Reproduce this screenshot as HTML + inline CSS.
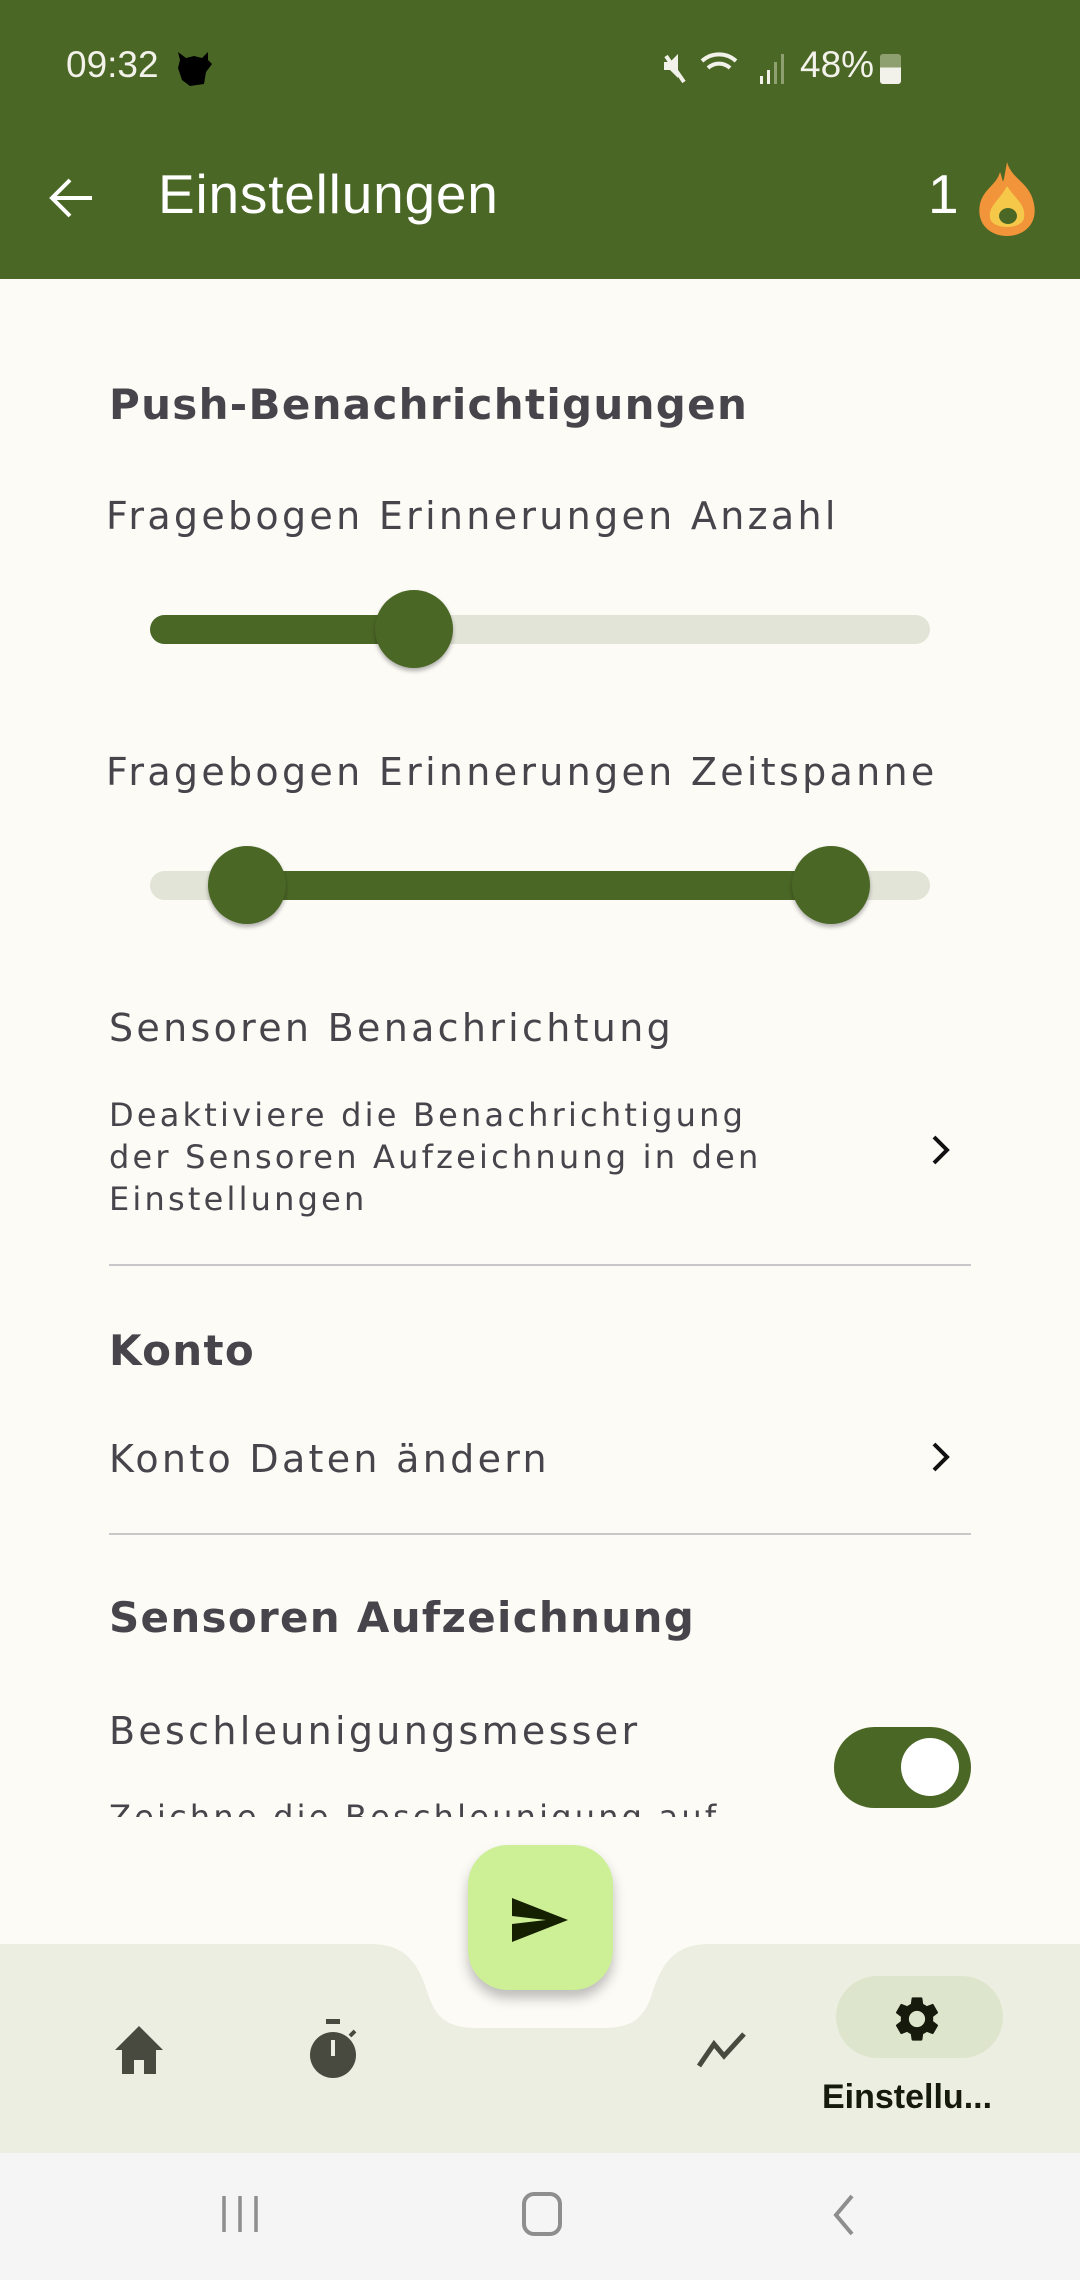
<!DOCTYPE html>
<html><head><meta charset="utf-8"><style>
*{margin:0;padding:0;box-sizing:border-box}
body{width:1080px;height:2280px;position:relative;overflow:hidden;background:#fcfbf6;font-family:"DejaVu Sans","Liberation Sans",sans-serif;color:#47454b}
.abs{position:absolute;white-space:nowrap}
.h{font-size:42px;font-weight:bold;letter-spacing:1.3px}
.t{font-size:38px;letter-spacing:3.3px}
.d{font-size:32px;letter-spacing:3.2px;line-height:42px}
.track{position:absolute;height:29px;border-radius:15px;background:#e3e4d8}
.act{position:absolute;height:29px;background:#4b6726;border-radius:15px}
.thumb{position:absolute;width:78px;height:78px;border-radius:50%;background:#4b6726;box-shadow:0 3px 4px rgba(0,0,0,.3)}
.div{position:absolute;left:109px;width:862px;height:2px;background:#c9c7c9}
</style></head><body>
<div class="abs" style="left:0;top:0;width:1080px;height:279px;background:#4b6726"></div>
<div class="abs" style="left:66px;top:44px;font-family:'Liberation Sans',sans-serif;font-size:37px;color:#f2f2ea">09:32</div>
<svg class="abs" style="left:174px;top:50px" width="40" height="36" viewBox="0 0 40 36"><path d="M6 10L4 2 12 8 20 6 28 8 34 2 34 10 38 14 32 22 30 34 16 36 8 30 4 18Z" fill="#000"/></svg>
<div class="abs" style="left:800px;top:44px;font-family:'Liberation Sans',sans-serif;font-size:37px;color:#f2f2ea">48%</div>
<svg class="abs" style="left:660px;top:48px" width="250" height="40" viewBox="0 0 250 40">
<g fill="none" stroke="#f2f2ea" stroke-width="4"><path d="M6 8 L24 34"/><path d="M48 20 a16 16 0 0 1 22 0 M42 13 a25 25 0 0 1 34 0"/></g>
<path d="M4 14h6l8-8v24l-8-8H4z" fill="#f2f2ea"/>
<rect x="100" y="28" width="3" height="8" fill="#f2f2ea"/><rect x="107" y="22" width="3" height="14" fill="#f2f2ea"/><rect x="114" y="14" width="3" height="22" fill="#8fa070"/><rect x="121" y="6" width="3" height="30" fill="#8fa070"/>
</svg>
<div class="abs" style="left:880px;top:54px;width:21px;height:30px;border-radius:3px;background:linear-gradient(#8fa070 45%,#f2f2ea 45%)"></div>
<svg class="abs" style="left:48px;top:176px" width="48" height="44" viewBox="0 0 48 44"><path d="M44 22H6M22 4L4 22l18 18" fill="none" stroke="#fff" stroke-width="4"/></svg>
<div class="abs" style="left:158px;top:162px;font-family:'Liberation Sans',sans-serif;font-size:55px;letter-spacing:0.8px;color:#fff">Einstellungen</div>
<div class="abs" style="left:928px;top:162px;font-family:'Liberation Sans',sans-serif;font-size:55px;color:#fff">1</div>
<svg class="abs" style="left:972px;top:160px" width="70" height="76" viewBox="0 0 70 76"><path d="M35 2 C40 20 58 22 62 44 C66 64 52 76 35 76 C18 76 4 64 8 44 C12 28 24 26 28 12 C32 22 30 30 35 2Z" fill="#f1943a"/><path d="M35 26 C44 40 54 44 52 58 C50 70 20 70 18 58 C16 46 28 40 35 26Z" fill="#f6c84a"/><ellipse cx="36" cy="56" rx="9" ry="8" fill="#4b6726"/></svg>

<div class="abs h" style="left:109px;top:380px">Push-Benachrichtigungen</div>
<div class="abs t" style="left:106px;top:494px">Fragebogen Erinnerungen Anzahl</div>
<div class="track" style="left:150px;top:615px;width:780px"></div>
<div class="act" style="left:150px;top:615px;width:264px"></div>
<div class="thumb" style="left:375px;top:590px"></div>
<div class="abs t" style="left:106px;top:750px">Fragebogen Erinnerungen Zeitspanne</div>
<div class="track" style="left:150px;top:871px;width:780px"></div>
<div class="act" style="left:247px;top:871px;width:584px;border-radius:0"></div>
<div class="thumb" style="left:208px;top:846px"></div>
<div class="thumb" style="left:792px;top:846px"></div>

<div class="abs t" style="left:109px;top:1006px">Sensoren Benachrichtung</div>
<div class="abs d" style="left:109px;top:1094px">Deaktiviere die Benachrichtigung<br>der Sensoren Aufzeichnung in den<br>Einstellungen</div>
<svg class="abs" style="left:930px;top:1134px" width="22" height="32" viewBox="0 0 22 32"><path d="M4 3l13 13L4 29" fill="none" stroke="#111" stroke-width="4"/></svg>
<div class="div" style="top:1264px"></div>
<div class="abs h" style="left:109px;top:1326px">Konto</div>
<div class="abs t" style="left:109px;top:1437px">Konto Daten ändern</div>
<svg class="abs" style="left:930px;top:1441px" width="22" height="32" viewBox="0 0 22 32"><path d="M4 3l13 13L4 29" fill="none" stroke="#111" stroke-width="4"/></svg>
<div class="div" style="top:1533px"></div>
<div class="abs h" style="left:109px;top:1593px">Sensoren Aufzeichnung</div>
<div class="abs t" style="left:109px;top:1709px">Beschleunigungsmesser</div>
<div class="abs" style="left:0;top:1790px;width:800px;height:27px;overflow:hidden">
<div class="abs d" style="left:109px;top:6px">Zeichne die Beschleunigung auf</div>
</div>
<div class="abs" style="left:834px;top:1727px;width:137px;height:81px;border-radius:41px;background:#4b6726"></div>
<div class="abs" style="left:901px;top:1738px;width:58px;height:58px;border-radius:50%;background:#fff"></div>

<svg class="abs" style="left:0;top:1944px" width="1080" height="209" viewBox="0 0 1080 209"><path d="M0 0H370C405 0 418 18 428 50C437 78 452 84 480 84H600C628 84 643 78 652 50C662 18 675 0 710 0H1080V209H0Z" fill="#edeee2"/></svg>
<div class="abs" style="left:468px;top:1845px;width:145px;height:145px;border-radius:40px;background:#cdef96;box-shadow:0 8px 12px rgba(0,0,0,.25)"></div>
<svg class="abs" style="left:510px;top:1895px" width="62" height="50" viewBox="0 0 62 50"><path d="M2 3L58 25 2 47 2 29 36 25 2 21Z" fill="#152000"/></svg>
<svg class="abs" style="left:112px;top:2024px" width="54" height="52" viewBox="0 0 54 52"><path d="M27 2L3 26h7v24h12V36h10v14h12V26h7z" fill="#484a40"/></svg>
<svg class="abs" style="left:306px;top:2018px" width="56" height="62" viewBox="0 0 56 62"><rect x="20" y="1" width="14" height="5" fill="#484a40"/><circle cx="27" cy="37" r="23" fill="#484a40"/><rect x="25" y="22" width="4" height="16" fill="#edeee2"/><path d="M44 18l5-5" stroke="#484a40" stroke-width="4"/></svg>
<svg class="abs" style="left:696px;top:2030px" width="52" height="40" viewBox="0 0 52 40"><path d="M3 36L18 14 28 26 48 4" fill="none" stroke="#484a40" stroke-width="5"/></svg>
<div class="abs" style="left:836px;top:1976px;width:167px;height:82px;border-radius:41px;background:#dde6cc"></div>
<svg class="abs" style="left:890px;top:1992px" width="54" height="54" viewBox="0 0 24 24"><path fill="#151a0c" d="M19.14 12.94c.04-.3.06-.61.06-.94 0-.32-.02-.64-.07-.94l2.030-1.58a.49.49 0 0 0 .12-.61l-1.92-3.32a.49.49 0 0 0-.59-.22l-2.39.96c-.5-.38-1.03-.7-1.62-.94l-.36-2.54a.48.48 0 0 0-.48-.41h-3.84c-.24 0-.43.17-.47.41l-.36 2.54c-.59.24-1.130.57-1.62.94l-2.39-.96a.48.48 0 0 0-.59.22L2.74 8.87c-.12.21-.08.47.12.61l2.03 1.58c-.05.3-.09.63-.09.94s.02.64.07.94l-2.03 1.58a.49.49 0 0 0-.12.61l1.92 3.32c.12.22.37.29.59.22l2.39-.96c.5.38 1.03.7 1.62.94l.36 2.54c.05.24.24.41.48.41h3.84c.24 0 .44-.17.47-.41l.36-2.54c.59-.24 1.13-.56 1.62-.94l2.39.96c.22.08.47 0 .59-.22l1.92-3.32c.12-.22.07-.47-.12-.61l-2.01-1.58zM12 15.6A3.6 3.6 0 1 1 12 8.4a3.6 3.6 0 0 1 0 7.2z"/></svg>
<div class="abs" style="left:822px;top:2078px;font-family:'Liberation Sans',sans-serif;font-weight:bold;font-size:34px;color:#151a0c">Einstellu...</div>

<div class="abs" style="left:0;top:2153px;width:1080px;height:127px;background:#f5f5f5"></div>
<svg class="abs" style="left:215px;top:2190px" width="50" height="50" viewBox="0 0 50 50"><path d="M9 6v36M25 6v36M41 6v36" stroke="#8e8e8e" stroke-width="3.5"/></svg>
<div class="abs" style="left:522px;top:2192px;width:40px;height:44px;border:4px solid #8e8e8e;border-radius:12px"></div>
<svg class="abs" style="left:826px;top:2190px" width="36" height="50" viewBox="0 0 36 50"><path d="M26 6L10 25l16 19" fill="none" stroke="#8e8e8e" stroke-width="4"/></svg>
</body></html>
